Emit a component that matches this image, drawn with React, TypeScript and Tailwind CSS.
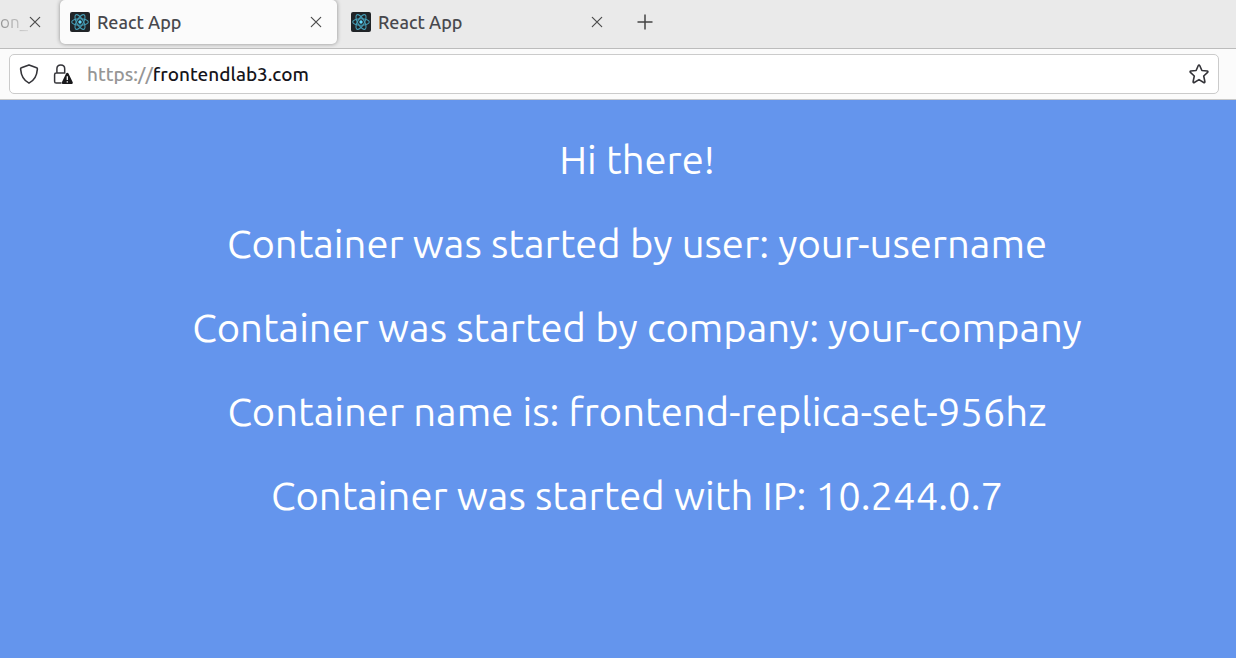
import React from "react";

const messages: string[] = [
  "Hi there!",
  "Container was started by user: your-username",
  "Container was started by company: your-company",
  "Container name is: frontend-replica-set-956hz",
  "Container was started with IP: 10.244.0.7",
];

function ReactLogo() {
  return (
    <svg viewBox="0 0 20 20" className="size-5 shrink-0" aria-hidden="true">
      <rect width="20" height="20" rx="2" fill="#202427" />
      <g fill="none" stroke="#459db5" strokeWidth="1.1">
        <ellipse cx="10" cy="10" rx="8.3" ry="3.3" />
        <ellipse cx="10" cy="10" rx="8.3" ry="3.3" transform="rotate(60 10 10)" />
        <ellipse cx="10" cy="10" rx="8.3" ry="3.3" transform="rotate(120 10 10)" />
      </g>
      <circle cx="10" cy="10" r="1.7" fill="#61dafb" />
    </svg>
  );
}

function CloseIcon() {
  return (
    <svg viewBox="0 0 12 12" className="size-3" fill="none" stroke="#4c4c4c" strokeWidth="1.2" strokeLinecap="round" aria-hidden="true">
      <path d="M1.3 1.3l9.4 9.4M10.7 1.3l-9.4 9.4" />
    </svg>
  );
}

function ShieldIcon() {
  return (
    <svg viewBox="0 0 20 20" className="size-5" fill="none" stroke="#343439" strokeWidth="1.6" strokeLinejoin="round" aria-hidden="true">
      <path d="M10 0.9L17.6 3.7C18.2 3.9 18.5 4.4 18.4 5C17.9 11.6 15.7 16.4 10 19.1C4.3 16.4 2.1 11.6 1.6 5C1.5 4.4 1.8 3.9 2.4 3.7Z" />
    </svg>
  );
}

function LockWarningIcon() {
  return (
    <svg viewBox="0 0 20 20" className="size-5" fill="none" aria-hidden="true">
      <path d="M8.5 19.1H3.2C2.2 19.1 1.6 18.5 1.6 17.5V10.7C1.6 9.7 2.2 9.1 3.2 9.1H12.4M3.9 9V4.8C3.9 2.5 5.6 0.9 7.8 0.9S11.7 2.5 11.7 4.8V9" stroke="#343439" strokeWidth="1.5" />
      <path d="M13.1 9.6C13.6 8.6 15 8.6 15.5 9.6L19.6 18C20.1 19 19.5 20 18.4 20H10.2C9.1 20 8.5 19 9 18Z" fill="#18181b" />
      <path d="M14.3 12.2V16M14.3 17.3V18.6" stroke="#fff" strokeWidth="1.3" />
    </svg>
  );
}

function StarIcon() {
  return (
    <svg viewBox="0 0 20 20" className="size-5" fill="none" stroke="#343439" strokeWidth="1.6" strokeLinejoin="round" aria-hidden="true">
      <path d="M9.3 1.5C9.6 0.9 10.4 0.9 10.7 1.5L12.9 6.5L18.2 7C18.9 7.1 19.2 7.9 18.6 8.4L14.7 12L15.9 17.7C16 18.4 15.3 18.9 14.7 18.5L10 15.6L5.3 18.5C4.7 18.9 4 18.4 4.1 17.7L5.3 12L1.4 8.4C0.8 7.9 1.1 7.1 1.8 7L7.1 6.5Z" />
    </svg>
  );
}

function Tab({ title, active }: { title: string; active?: boolean }) {
  return (
    <div
      className={
        "flex h-11 w-[277px] shrink-0 items-center rounded-[5px] pr-3 pl-2.5 " +
        (active ? "bg-[#fbfbfb] shadow-[0_0_4px_rgba(0,0,0,0.4)]" : "")
      }
    >
      <button type="button" role="tab" aria-selected={!!active} className="flex grow items-center gap-[7px] text-left">
        <ReactLogo />
        <span>{title}</span>
      </button>
      <button type="button" aria-label="Close tab" className="flex size-[18px] items-center justify-center">
        <CloseIcon />
      </button>
    </div>
  );
}

export default function App() {
  return (
    <div className="flex min-h-screen flex-col bg-[#6495ed] font-['Ubuntu','Noto_Sans',sans-serif]">
      <header className="font-medium">
        <div className="flex h-12 items-start gap-1 overflow-hidden bg-[#eaeaea] text-[18px] text-[#48484d]">
          <div className="flex h-11 w-14 shrink-0 items-center justify-between pr-[15px]">
            <button type="button" role="tab" aria-selected="false" className="bg-linear-to-r from-[#929292] to-[#d4d4d4] bg-clip-text text-[17px] font-normal text-transparent">
              on_
            </button>
            <button type="button" aria-label="Close tab" className="flex w-3 shrink-0 justify-center">
              <CloseIcon />
            </button>
          </div>
          <Tab title="React App" active />
          <Tab title="React App" />
          <button type="button" aria-label="Open a new tab" className="flex h-11 w-[46px] items-center justify-center">
            <svg viewBox="0 0 16 16" className="size-4" fill="none" stroke="#444" strokeWidth="1.5" aria-hidden="true">
              <path d="M8 0.5V15.5M0.5 8H15.5" />
            </svg>
          </button>
        </div>
        <div className="border-t border-b border-t-[#bcbcbc] border-b-[#c8c8c8] bg-[#fbfbfb] pt-[5px] pr-[17px] pb-[5px] pl-[9px]">
          <div className="flex h-10 items-center rounded-[5px] border border-[#cbcbcb] bg-white px-[9px] text-[19px]">
            <button type="button" aria-label="Tracking protection">
              <ShieldIcon />
            </button>
            <button type="button" aria-label="Connection is not secure" className="ml-3.5">
              <LockWarningIcon />
            </button>
            <label htmlFor="address" className="ml-3.5 text-[#969696]">
              https://
            </label>
            <input
              id="address"
              type="text"
              aria-label="Address"
              defaultValue="frontendlab3.com"
              className="min-w-0 grow bg-transparent text-[#15141a] outline-none"
            />
            <button type="button" aria-label="Bookmark this page">
              <StarIcon />
            </button>
          </div>
        </div>
      </header>
      <main className="flex flex-col gap-9 pt-9 pl-[38px] text-center text-[40px] leading-[48px] text-white">
        {messages.map((message) => (
          <p key={message}>{message}</p>
        ))}
      </main>
    </div>
  );
}
